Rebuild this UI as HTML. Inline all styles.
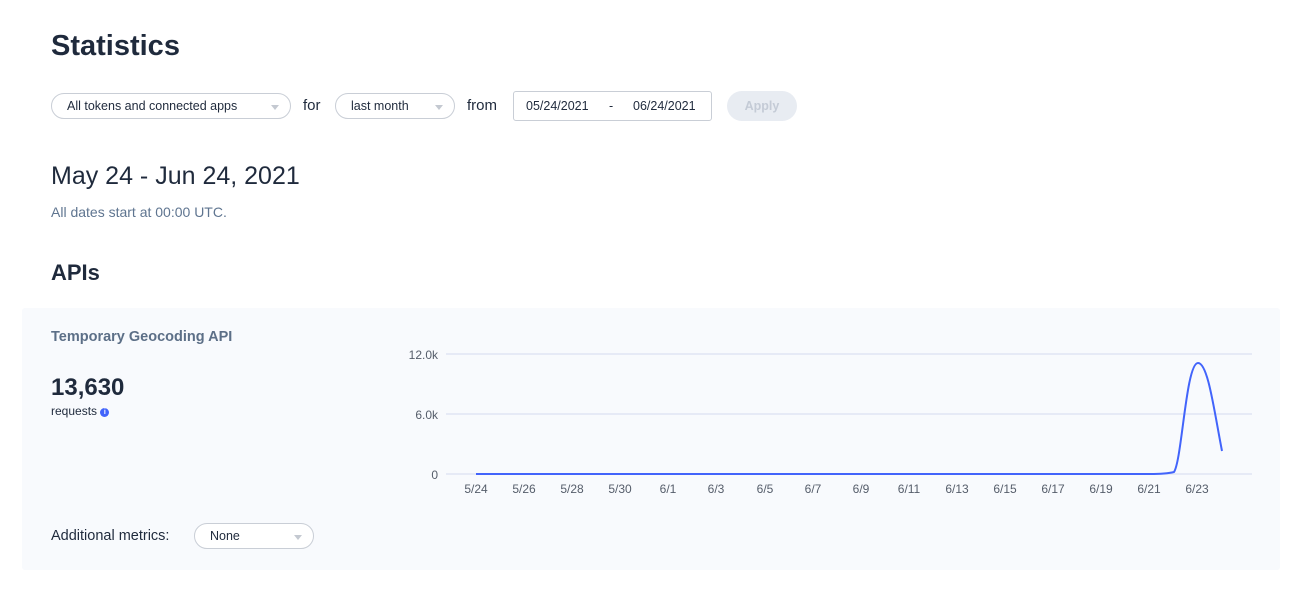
<!DOCTYPE html>
<html><head><meta charset="utf-8"><style>
body{margin:0;width:1305px;height:603px;background:#fff;font-family:"Liberation Sans",sans-serif;color:#1f2a3c;position:relative;overflow:hidden}
.a{position:absolute;white-space:nowrap}
.sel{position:absolute;border:1px solid #c9ced6;border-radius:14px;height:26px;box-sizing:border-box;font-size:12.5px;line-height:24px;padding-left:15px;color:#1f2a3c;background:#fff}
.sel:after{content:"";position:absolute;right:11px;top:11px;border-left:4px solid transparent;border-right:4px solid transparent;border-top:5px solid #c4c9d1}
</style></head><body>
<div class="a" style="left:51px;top:30px;font-size:29px;font-weight:bold">Statistics</div>
<div class="sel" style="left:51px;top:93px;width:240px">All tokens and connected apps</div>
<div class="a" style="left:303px;top:97px;font-size:15px">for</div>
<div class="sel" style="left:335px;top:93px;width:120px">last month</div>
<div class="a" style="left:467px;top:97px;font-size:15px">from</div>
<div class="a" style="left:513px;top:91px;width:199px;height:30px;border:1px solid #c9ced6;border-radius:3px;box-sizing:border-box;font-size:12.5px;line-height:28px"><span style="position:absolute;left:12px">05/24/2021</span><span style="position:absolute;left:95px">-</span><span style="position:absolute;left:119px">06/24/2021</span></div>
<div class="a" style="left:727px;top:91px;width:70px;height:30px;border-radius:15px;background:#e8ecf2;color:#c4cbd6;font-size:12.5px;font-weight:bold;line-height:30px;text-align:center">Apply</div>
<div class="a" style="left:51px;top:162px;font-size:25px">May 24 - Jun 24, 2021</div>
<div class="a" style="left:51px;top:204px;font-size:14px;color:#5f7590">All dates start at 00:00 UTC.</div>
<div class="a" style="left:51px;top:260px;font-size:22px;font-weight:bold">APIs</div>
<div class="a" style="left:22px;top:308px;width:1258px;height:262px;background:#f8fafd;border-radius:3px"></div>
<div class="a" style="left:51px;top:329px;font-size:14.5px;font-weight:bold;color:#5c6f87">Temporary Geocoding API</div>
<div class="a" style="left:51px;top:374px;font-size:24px;font-weight:bold">13,630</div>
<div class="a" style="left:51px;top:404px;font-size:12px">requests <span style="display:inline-block;width:9px;height:9px;border-radius:50%;background:#4264fb;color:#fff;font-size:7px;line-height:9px;text-align:center;vertical-align:1px;font-weight:bold">i</span></div>
<div class="a" style="left:51px;top:528px;font-size:14.5px">Additional metrics:</div>
<div class="sel" style="left:194px;top:523px;width:120px">None</div>
<svg class="a" style="left:0;top:0" width="1305" height="603">
<g stroke="#dfe5f3" stroke-width="1.5"><line x1="446" y1="354" x2="1252" y2="354"/><line x1="446" y1="414" x2="1252" y2="414"/><line x1="446" y1="474" x2="1252" y2="474"/></g>
<g font-family="Liberation Sans" font-size="12" fill="#555d6a" text-anchor="end"><text x="438" y="359">12.0k</text><text x="438" y="419">6.0k</text><text x="438" y="479">0</text></g>
<g font-family="Liberation Sans" font-size="12" fill="#555d6a" text-anchor="middle">
<text x="476" y="493">5/24</text><text x="524" y="493">5/26</text><text x="572" y="493">5/28</text><text x="620" y="493">5/30</text><text x="668" y="493">6/1</text><text x="716" y="493">6/3</text><text x="765" y="493">6/5</text><text x="813" y="493">6/7</text><text x="861" y="493">6/9</text><text x="909" y="493">6/11</text><text x="957" y="493">6/13</text><text x="1005" y="493">6/15</text><text x="1053" y="493">6/17</text><text x="1101" y="493">6/19</text><text x="1149" y="493">6/21</text><text x="1197" y="493">6/23</text></g>
<path d="M476 474 L1150 474 C1165 474 1170 473 1174 472 C1182 460 1186 363 1198 363 C1208 363 1214 410 1222 451" fill="none" stroke="#4264fb" stroke-width="2"/>
</svg>
</body></html>
